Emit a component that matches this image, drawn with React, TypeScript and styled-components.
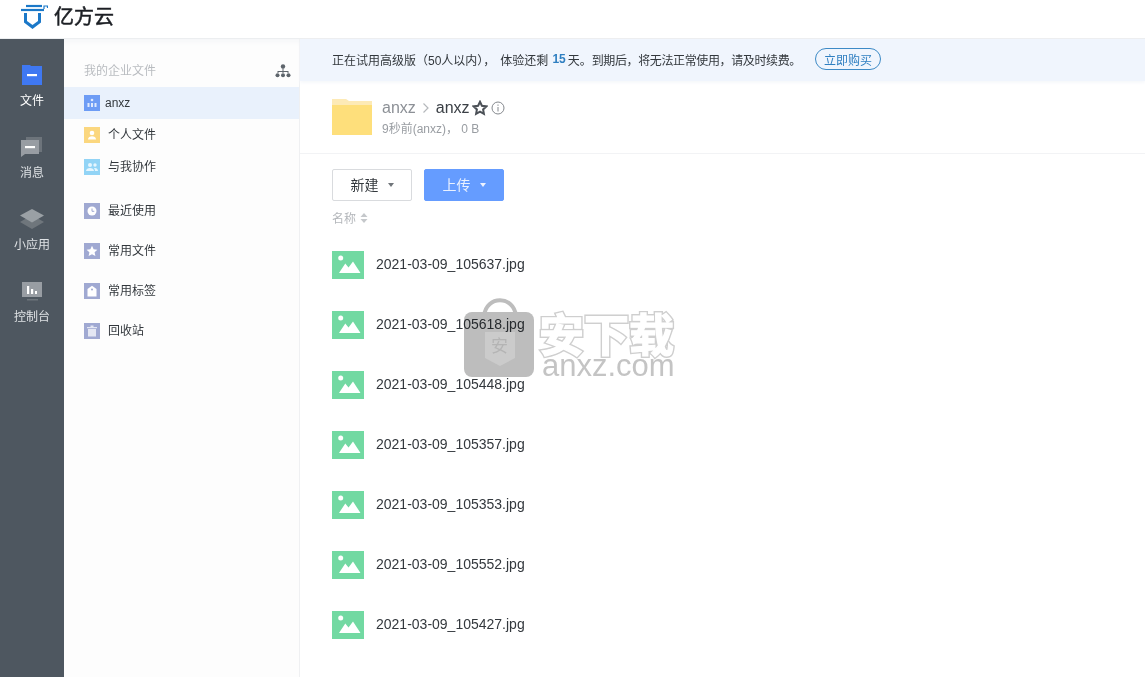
import { ReactNode } from 'react';
import styled, { createGlobalStyle } from 'styled-components';

const FONT = '"Liberation Sans", "Noto Sans CJK SC", sans-serif';

const GlobalStyle = createGlobalStyle`
  html, body {
    margin: 0;
    height: 100%;
    overflow: hidden;
    background: #fff;
    font-family: ${FONT};
  }
  * {
    box-sizing: border-box;
  }
`;

const Page = styled.div`
  position: relative;
  display: flex;
  flex-direction: column;
  width: 1145px;
  height: 677px;
  overflow: hidden;
`;

const Header = styled.header`
  display: flex;
  align-items: center;
  flex: 0 0 39px;
  padding: 0 0 5px 20px;
  gap: 6px;
  background: #fff;
  border-bottom: 1px solid #eceef0;
`;

const LogoText = styled.span`
  font-size: 20px;
  line-height: 24px;
  color: #1c1f24;
  -webkit-text-stroke: 0.5px #1c1f24;
`;

const Body = styled.div`
  display: flex;
  flex: 1;
  min-height: 0;
`;

const Rail = styled.nav`
  display: flex;
  flex-direction: column;
  flex: 0 0 64px;
  padding-top: 26px;
  gap: 20px;
  background: #4e5760;
`;

const RailItem = styled.div<{ $active?: boolean }>`
  display: flex;
  flex-direction: column;
  align-items: center;
  height: 52px;
  gap: 8px;
  font-size: 12px;
  line-height: 16px;
  color: ${(p) => (p.$active ? '#fff' : '#dfe2e5')};
`;

const RailIcon = styled.svg`
  display: block;
  width: 20px;
  height: 20px;
  overflow: visible;
`;

const Sidebar = styled.aside`
  display: flex;
  flex-direction: column;
  flex: 0 0 236px;
  padding-top: 23px;
  background: #fdfdfd;
  border-right: 1px solid #eff0f2;
  box-shadow: inset 0 8px 8px -8px #eef0f3;
`;

const SideHead = styled.div`
  display: flex;
  align-items: center;
  justify-content: space-between;
  height: 18px;
  margin-bottom: 7px;
  padding: 0 8px 0 20px;
  font-size: 12px;
  color: #b9bcc0;
`;

const SideHeadLabel = styled.span`
  margin-bottom: 3px;
`;

const SideRow = styled.div<{ $active?: boolean; $top?: number }>`
  display: flex;
  align-items: center;
  height: 32px;
  margin-top: ${(p) => p.$top ?? 0}px;
  padding-left: 20px;
  gap: 8px;
  font-size: 12px;
  color: #33383d;
  background: ${(p) => (p.$active ? '#e9f1fc' : 'transparent')};
`;

const SideBadge = styled.span<{ $color: string }>`
  display: flex;
  align-items: center;
  justify-content: center;
  flex: 0 0 16px;
  height: 16px;
  background: ${(p) => p.$color};
`;

const SideLabel = styled.span`
  margin-bottom: 3px;
`;

const SideLatin = styled.span`
  margin: 0 0 1px -3px;
`;

const Main = styled.main`
  display: flex;
  flex-direction: column;
  flex: 1;
  min-width: 0;
`;

const Banner = styled.div`
  display: flex;
  align-items: center;
  flex: 0 0 42px;
  padding: 0 0 2px 32px;
  font-size: 12px;
  color: #33383d;
  background: #f0f5fd;
  box-shadow: 0 2px 3px #f6f8fb;
`;

const BannerPart = styled.span<{ $shift?: number; $tight?: boolean }>`
  margin-left: ${(p) => p.$shift ?? 0}px;
  letter-spacing: ${(p) => (p.$tight ? '-0.38px' : 'normal')};
`;

const Days = styled.b`
  margin: 0 2px 0 4px;
  color: #2f7fc1;
`;

const BuyButton = styled.span`
  display: flex;
  align-items: center;
  justify-content: center;
  width: 66px;
  height: 22px;
  margin-left: 14px;
  font-size: 12px;
  color: #2f7fc1;
  border: 1px solid #3d8ac6;
  border-radius: 11px;
`;

const FolderHead = styled.div`
  display: flex;
  align-items: center;
  flex: 0 0 73px;
  padding: 0 0 1px 32px;
  gap: 10px;
  border-bottom: 1px solid #f2f3f5;
`;

const FolderInfo = styled.div`
  display: flex;
  flex-direction: column;
  gap: 4px;
`;

const Crumbs = styled.div`
  display: flex;
  align-items: center;
  height: 20px;
  font-size: 16px;
  color: #8c9096;
`;

const CrumbCurrent = styled.span`
  margin-right: 2px;
  color: #3b4046;
`;

const CrumbSep = styled.svg`
  width: 8px;
  height: 12px;
  margin: 0 6px 0 6px;
`;

const InfoIcon = styled.svg`
  margin-left: 3px;
`;

const FolderMeta = styled.div`
  font-size: 12px;
  line-height: 14px;
  color: #999da2;
`;

const Toolbar = styled.div`
  display: flex;
  padding: 15px 0 0 32px;
  gap: 12px;
`;

const ToolButton = styled.span<{ $primary?: boolean }>`
  display: flex;
  align-items: center;
  justify-content: center;
  width: 80px;
  height: 32px;
  gap: 9px;
  font-size: 14px;
  border-radius: 2px;
  color: ${(p) => (p.$primary ? '#eaf1ff' : '#33383d')};
  background: ${(p) => (p.$primary ? '#659cff' : '#fff')};
  border: 1px solid ${(p) => (p.$primary ? '#659cff' : '#d9dbde')};
`;

const ToolLabel = styled.span`
  margin-bottom: 2px;
`;

const Caret = styled.i<{ $primary?: boolean }>`
  width: 0;
  height: 0;
  border-style: solid;
  border-width: 4px 3.5px 0;
  border-color: ${(p) => (p.$primary ? '#eef3ff' : '#70757a')} transparent transparent;
`;

const ColumnHead = styled.div`
  display: flex;
  align-items: center;
  height: 18px;
  margin-top: 8px;
  padding-left: 32px;
  gap: 4px;
  font-size: 12px;
  color: #b4b7bb;
`;

const ColumnLabel = styled.span`
  margin-bottom: 2px;
`;

const FileList = styled.ul`
  display: flex;
  flex-direction: column;
  margin: 8px 0 0;
  padding: 0 0 0 32px;
  list-style: none;
`;

const FileRow = styled.li`
  display: flex;
  align-items: center;
  height: 60px;
  gap: 12px;
  font-size: 14px;
  color: #33383d;
`;

const FileName = styled.span`
  margin-bottom: 2px;
`;

const Watermark = styled.div`
  position: absolute;
  left: 464px;
  top: 296px;
  display: flex;
  gap: 4px;
  pointer-events: none;
`;

const LockWrap = styled.div`
  position: relative;
  width: 71px;
  height: 82px;
  mix-blend-mode: multiply;
`;

const LockChar = styled.span`
  position: absolute;
  left: 27px;
  top: 41px;
  font-size: 17px;
  line-height: 20px;
  color: #b4b4b4;
`;

const WatermarkText = styled.div`
  display: flex;
  flex-direction: column;
  margin-top: 20px;
`;

const WatermarkTitle = styled.span`
  position: relative;
  font-size: 45px;
  line-height: 41px;
  font-weight: 700;
  color: #cfcfcf;
  -webkit-text-stroke: 4px #cfcfcf;

  &::after {
    content: '安下载';
    position: absolute;
    left: 0;
    top: 0;
    color: #fff;
    -webkit-text-stroke: 1.2px #fff;
  }
`;

const WatermarkDomain = styled.span`
  margin: 0 0 0 3px;
  font-size: 31px;
  line-height: 18px;
  color: #c4c4c4;
`;

function Logo() {
  return (
    <svg width="28" height="28" viewBox="0 0 28 28" fill="none">
      <path d="M6 3h16" stroke="#1b78c8" strokeWidth="2.200" />
      <path d="M1 7h23" stroke="#1b78c8" strokeWidth="2.200" />
      <path d="M4 10v9.500l8.500 6.500 8.500-6.500V10h-3v8l-5.500 4-5.500-4v-8z" fill="#1b78c8" />
      <path d="M24 6V3h3.500v2" stroke="#1b78c8" strokeWidth="1.200" />
    </svg>
  );
}

function RailGlyph({ children }: { children: ReactNode }) {
  return <RailIcon viewBox="0 0 20 20">{children}</RailIcon>;
}

const files = [
  '2021-03-09_105637.jpg',
  '2021-03-09_105618.jpg',
  '2021-03-09_105448.jpg',
  '2021-03-09_105357.jpg',
  '2021-03-09_105353.jpg',
  '2021-03-09_105552.jpg',
  '2021-03-09_105427.jpg',
];

function ImageIcon() {
  return (
    <svg width="32" height="28" viewBox="0 0 32 28">
      <rect width="32" height="28" fill="#72d9a2" />
      <circle cx="8.700" cy="7" r="2.500" fill="#fff" />
      <path d="M7 22L13.300 12.500L16.500 16.500L21 10.500L28.500 22Z" fill="#fff" />
    </svg>
  );
}

export default function App() {
  return (
    <Page>
      <GlobalStyle />
      <Header>
        <Logo />
        <LogoText>亿方云</LogoText>
      </Header>
      <Body>
        <Rail>
          <RailItem $active>
            <RailGlyph>
              <path d="M0 0h8l1 1h11v19H0z" fill="#3f78f2" />
              <rect x="5" y="9" width="10" height="2.200" fill="#fff" />
            </RailGlyph>
            文件
          </RailItem>
          <RailItem>
            <RailGlyph>
              <path d="M4 0h16v15H4z" fill="#6d747b" />
              <path d="M-1 3h18v14H3l-4 3z" fill="#989da3" />
              <rect x="3" y="9" width="10" height="2.200" fill="#fff" />
            </RailGlyph>
            消息
          </RailItem>
          <RailItem>
            <RailGlyph>
              <path d="M10 6l12 7-12 7-12-7z" fill="#6f767c" />
              <path d="M10 0l12 6.500-12 7-12-7z" fill="#9aa0a5" />
            </RailGlyph>
            小应用
          </RailItem>
          <RailItem>
            <RailGlyph>
              <rect width="20" height="15" y="1" fill="#989da3" />
              <path d="M5 5h2.200v8H5zM9 8h2.200v5H9zM13 10h2v3h-2z" fill="#fff" />
              <rect x="5" y="18" width="11" height="1.500" fill="#6d747b" />
            </RailGlyph>
            控制台
          </RailItem>
        </Rail>
        <Sidebar>
          <SideHead>
            <SideHeadLabel>我的企业文件</SideHeadLabel>
            <svg width="16" height="14" viewBox="0 0 16 14" fill="#5e656c">
              <circle cx="8" cy="2.400" r="2.200" />
              <path d="M7.500 4h1v3h5v2h-1V8H8.500v1h-1V8H3.500v1h-1V7h5z" />
              <circle cx="2.500" cy="11.200" r="2" />
              <circle cx="8" cy="11.200" r="2" />
              <circle cx="13.500" cy="11.200" r="2" />
            </svg>
          </SideHead>
          <SideRow $active>
            <SideBadge $color="#6d9cf5">
              <svg width="10" height="10" viewBox="0 0 10 10" fill="#dfe9fd">
                <circle cx="5" cy="2" r="1.300" />
                <path d="M0.500 5h2v4h-2zM4 5h2v4H4zM7.500 5h2v4h-2z" />
              </svg>
            </SideBadge>
            <SideLatin>anxz</SideLatin>
          </SideRow>
          <SideRow>
            <SideBadge $color="#fbd77f">
              <svg width="10" height="10" viewBox="0 0 10 10" fill="#fff">
                <circle cx="5" cy="3" r="2.300" />
                <path d="M1 9.500c0-2.500 2-3.300 4-3.300s4 .8 4 3.300z" />
              </svg>
            </SideBadge>
            <SideLabel>个人文件</SideLabel>
          </SideRow>
          <SideRow>
            <SideBadge $color="#92d4f6">
              <svg width="12" height="10" viewBox="0 0 12 10" fill="#e6f6fe">
                <circle cx="4" cy="3" r="2" />
                <circle cx="9" cy="3" r="1.700" />
                <path d="M0 9c0-2 2-3 4-3s4 1 4 3zM9 9c0-1-.3-2-1-3 2-.5 4 .5 4 3z" />
              </svg>
            </SideBadge>
            <SideLabel>与我协作</SideLabel>
          </SideRow>
          <SideRow $top={12}>
            <SideBadge $color="#a0a9d2">
              <svg width="10" height="10" viewBox="0 0 10 10">
                <circle cx="5" cy="5" r="4.500" fill="#fff" />
                <path d="M5 2.500v2.800h2.300" stroke="#a0a9d2" fill="none" />
              </svg>
            </SideBadge>
            <SideLabel>最近使用</SideLabel>
          </SideRow>
          <SideRow $top={8}>
            <SideBadge $color="#a0a9d2">
              <svg width="12" height="12" viewBox="0 0 12 12" fill="#fff">
                <path d="M6 .8l1.600 3.500 3.800.4-2.800 2.600.8 3.800L6 9.200l-3.400 1.900.8-3.800L.6 4.700l3.800-.4z" />
              </svg>
            </SideBadge>
            <SideLabel>常用文件</SideLabel>
          </SideRow>
          <SideRow $top={8}>
            <SideBadge $color="#a0a9d2">
              <svg width="10" height="12" viewBox="0 0 10 12">
                <path d="M0.500 4L5 .8 9.500 4v7.500h-9z" fill="#fff" />
                <circle cx="5" cy="4.500" r="1" fill="#a0a9d2" />
              </svg>
            </SideBadge>
            <SideLabel>常用标签</SideLabel>
          </SideRow>
          <SideRow $top={8}>
            <SideBadge $color="#a0a9d2">
              <svg width="10" height="12" viewBox="0 0 10 12" fill="#e4e7f3">
                <path d="M0 2h10v1.200H0zM3.500.5h3V2h-3zM1 4h8v7.500H1z" />
              </svg>
            </SideBadge>
            <SideLabel>回收站</SideLabel>
          </SideRow>
        </Sidebar>
        <Main>
          <Banner>
            <BannerPart>正在试用高级版（50人以内），</BannerPart>
            <BannerPart $shift={5}>体验还剩</BannerPart>
            <Days>15</Days>
            <BannerPart>天。</BannerPart>
            <BannerPart $tight>到期后，将无法正常使用，请及时续费。</BannerPart>
            <BuyButton>立即购买</BuyButton>
          </Banner>
          <FolderHead>
            <svg width="40" height="36" viewBox="0 0 40 36">
              <path d="M0 0h14l3 2h23v34H0z" fill="#fdeab6" />
              <rect y="6" width="40" height="30" fill="#fedf7b" />
            </svg>
            <FolderInfo>
              <Crumbs>
                anxz
                <CrumbSep viewBox="0 0 8 12">
                  <path d="M1.500 1.500L6 6l-4.500 4.500" fill="none" stroke="#b5b8bc" strokeWidth="1.200" />
                </CrumbSep>
                <CrumbCurrent>anxz</CrumbCurrent>
                <svg width="16" height="16" viewBox="0 0 16 16">
                  <path
                    d="M8 1.800l1.900 4 4.400.6-3.200 3 .8 4.400L8 11.700l-3.900 2.100.8-4.400-3.200-3 4.400-.6z"
                    fill="none"
                    stroke="#4c5157"
                    strokeWidth="2"
                  />
                </svg>
                <InfoIcon width="14" height="14" viewBox="0 0 14 14">
                  <circle cx="7" cy="7" r="6" fill="none" stroke="#84888d" />
                  <path d="M7 6v4.500M7 3.500v1.300" stroke="#84888d" />
                </InfoIcon>
              </Crumbs>
              <FolderMeta>9秒前(anxz)， 0 B</FolderMeta>
            </FolderInfo>
          </FolderHead>
          <Toolbar>
            <ToolButton>
              <ToolLabel>新建</ToolLabel>
              <Caret />
            </ToolButton>
            <ToolButton $primary>
              <ToolLabel>上传</ToolLabel>
              <Caret $primary />
            </ToolButton>
          </Toolbar>
          <ColumnHead>
            <ColumnLabel>名称</ColumnLabel>
            <svg width="8" height="10" viewBox="0 0 8 10" fill="#c5c8cb">
              <path d="M4 0l3.500 4h-7zM4 10L.5 6h7z" />
            </svg>
          </ColumnHead>
          <FileList>
            {files.map((name) => (
              <FileRow key={name}>
                <ImageIcon />
                <FileName>{name}</FileName>
              </FileRow>
            ))}
          </FileList>
        </Main>
      </Body>
      <Watermark>
        <LockWrap>
          <svg width="71" height="82" viewBox="0 0 71 82">
            <path d="M20 20C22 -1 50 -1 52 20" fill="none" stroke="#bdbdbd" strokeWidth="4" />
            <rect y="16" width="70" height="65" rx="8" fill="#bdbdbd" />
            <path d="M21 36h30v26l-15 8-15-8z" fill="#cbcbcb" />
          </svg>
          <LockChar>安</LockChar>
        </LockWrap>
        <WatermarkText>
          <WatermarkTitle>安下载</WatermarkTitle>
          <WatermarkDomain>anxz.com</WatermarkDomain>
        </WatermarkText>
      </Watermark>
    </Page>
  );
}
